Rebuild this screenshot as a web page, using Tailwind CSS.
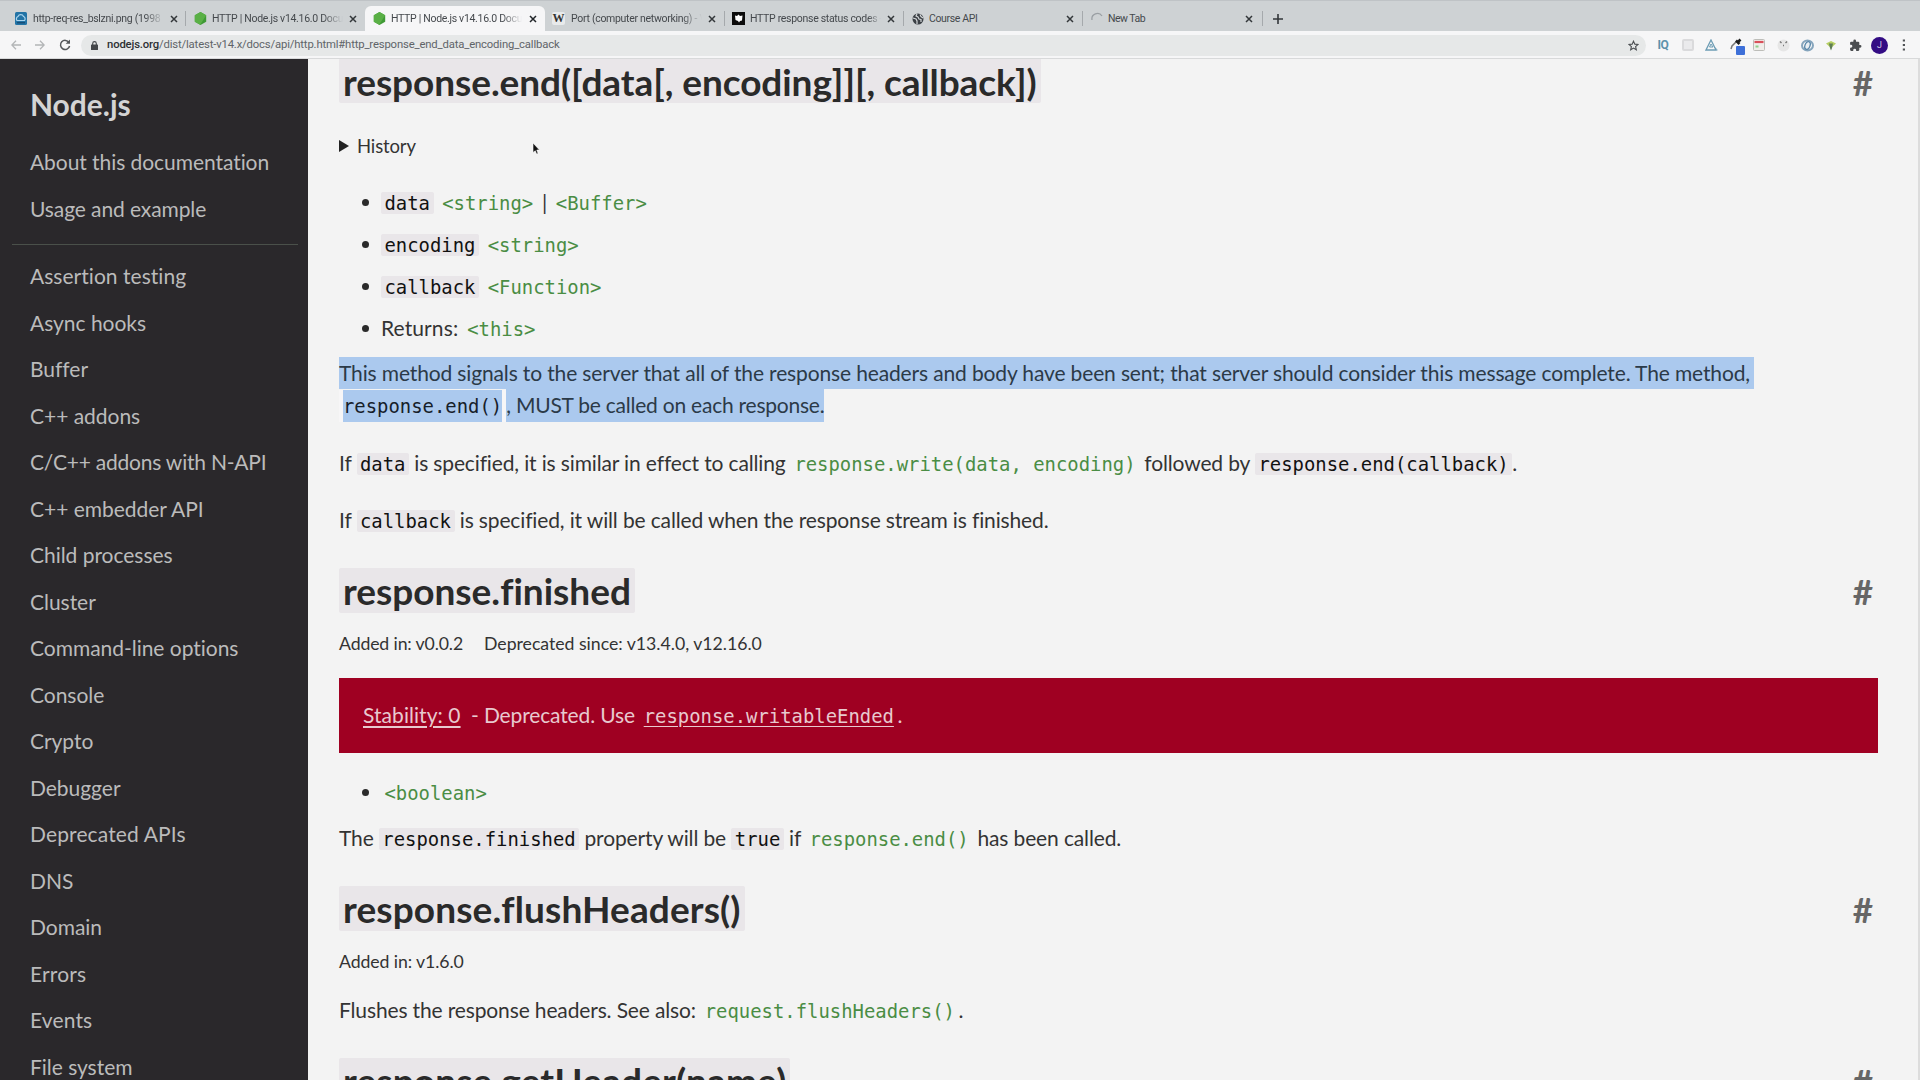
<!DOCTYPE html>
<html lang="en">
<head>
<meta charset="utf-8">
<title>HTTP | Node.js v14.16.0 Documentation</title>
<script src="https://cdn.jsdelivr.net/npm/@tailwindcss/browser@4"></script>
</head>
<body class="w-[1920px] h-[1080px] overflow-hidden bg-[#f3f3f3] font-['Lato',sans-serif] text-[#333] flex flex-col">

<!-- Tab strip -->
<header class="shrink-0 h-[59px] flex flex-col font-['Roboto',sans-serif] text-[10.500px] text-[#45494d]">
  <div class="h-[31px] bg-[#ced2d4] border-t border-[#bfc3c6] flex items-end pl-[6px]">
    <div class="w-[179px] h-[25px] pl-[8px] flex items-center">
      <svg class="w-[13px] h-[13px] shrink-0" viewBox="0 0 13 13"><rect x="1" width="12" height="13" rx="1.5" fill="#2273a5"/><path d="M3 8.500a2.500 2.500 0 0 1 1-4 3 3 0 0 1 5.500 0 2.500 2.500 0 0 1 1 4z" fill="none" stroke="#a9d4ee" stroke-width="1.200"/><path d="M3 10.800h8" stroke="#123f66"/></svg>
      <span class="ml-[6px] w-[131px] shrink-0 whitespace-nowrap [mask-image:linear-gradient(to_right,black_85%,transparent)] tracking-[-0.300px]">http-req-res_bslzni.png (1998</span>
      <svg class="w-[8px] h-[8px] ml-[6px] shrink-0" viewBox="0 0 8 8"><path d="M1 1l6 6M7 1l-6 6" stroke="#33373a" stroke-width="1.500"/></svg>
    </div>
    <div class="w-px h-[15px] mb-[5px] bg-[#a5a9ac]"></div>
    <div class="w-[179px] h-[25px] pl-[8px] flex items-center">
      <svg class="w-[13px] h-[13px] shrink-0" viewBox="0 0 13 13"><path d="M6.500 0l5.700 3.200v6.600L6.500 13 .8 9.800V3.200z" fill="#3f9a35"/><path d="M6.500 0l5.700 3.200-6 9.600L.8 9.800V3.200z" fill="#5ab046"/></svg>
      <span class="ml-[5px] w-[131px] shrink-0 whitespace-nowrap [mask-image:linear-gradient(to_right,black_85%,transparent)] tracking-[-0.300px]">HTTP | Node.js v14.16.0 Docu</span>
      <svg class="w-[8px] h-[8px] ml-[6px] shrink-0" viewBox="0 0 8 8"><path d="M1 1l6 6M7 1l-6 6" stroke="#33373a" stroke-width="1.500"/></svg>
    </div>
    <div class="w-[180px] h-[25px] pl-[8px] flex items-center bg-[#f6f6f7] rounded-t-[6px]">
      <svg class="w-[13px] h-[13px] shrink-0" viewBox="0 0 13 13"><path d="M6.500 0l5.700 3.200v6.600L6.500 13 .8 9.800V3.200z" fill="#3f9a35"/><path d="M6.500 0l5.700 3.200-6 9.600L.8 9.800V3.200z" fill="#5ab046"/></svg>
      <span class="ml-[5px] w-[131px] shrink-0 whitespace-nowrap [mask-image:linear-gradient(to_right,black_85%,transparent)] tracking-[-0.300px]">HTTP | Node.js v14.16.0 Docu</span>
      <svg class="w-[8px] h-[8px] ml-[7px] shrink-0" viewBox="0 0 8 8"><path d="M1 1l6 6M7 1l-6 6" stroke="#22262a" stroke-width="1.500"/></svg>
    </div>
    <div class="w-[179px] h-[25px] pl-[7px] flex items-center">
      <span class="w-[13px] h-[13px] shrink-0 rounded-[2px] bg-[#e8eaeb] font-['Liberation_Serif',serif] text-[12px] leading-[13px] font-bold text-center text-[#333]">W</span>
      <span class="ml-[6px] w-[131px] shrink-0 whitespace-nowrap [mask-image:linear-gradient(to_right,black_85%,transparent)] tracking-[-0.300px]">Port (computer networking) - \</span>
      <svg class="w-[8px] h-[8px] ml-[6px] shrink-0" viewBox="0 0 8 8"><path d="M1 1l6 6M7 1l-6 6" stroke="#33373a" stroke-width="1.500"/></svg>
    </div>
    <div class="w-px h-[15px] mb-[5px] bg-[#a5a9ac]"></div>
    <div class="w-[178px] h-[25px] pl-[7px] flex items-center">
      <svg class="w-[13px] h-[13px] shrink-0" viewBox="0 0 13 13"><rect width="13" height="13" fill="#0c0c0c"/><path d="M3 3.500l2 .5 1.500-1.500L8 4l2.500-.5-.5 5-2 .5-1 1.500-1-1.500-2.500-1z" fill="#fff"/></svg>
      <span class="ml-[5px] w-[131px] shrink-0 whitespace-nowrap [mask-image:linear-gradient(to_right,black_90%,transparent)] tracking-[-0.300px]">HTTP response status codes -</span>
      <svg class="w-[8px] h-[8px] ml-[6px] shrink-0" viewBox="0 0 8 8"><path d="M1 1l6 6M7 1l-6 6" stroke="#33373a" stroke-width="1.500"/></svg>
    </div>
    <div class="w-px h-[15px] mb-[5px] bg-[#a5a9ac]"></div>
    <div class="w-[178px] h-[25px] pl-[8px] flex items-center">
      <svg class="w-[12px] h-[12px] shrink-0" viewBox="0 0 12 12"><circle cx="6" cy="6" r="5.500" fill="#3b4045"/><path d="M1 5l3 1 1 2v3M5 1l-1 2 2 1 1 2 2 .5V9M8 1.500l1 2 2 1.500" fill="none" stroke="#d4d7d9" stroke-width="1.200"/></svg>
      <span class="ml-[5px] w-[131px] shrink-0 whitespace-nowrap tracking-[-0.350px]">Course API</span>
      <svg class="w-[8px] h-[8px] ml-[6px] shrink-0" viewBox="0 0 8 8"><path d="M1 1l6 6M7 1l-6 6" stroke="#33373a" stroke-width="1.500"/></svg>
    </div>
    <div class="w-px h-[15px] mb-[5px] bg-[#a5a9ac]"></div>
    <div class="w-[179px] h-[25px] pl-[8px] flex items-center">
      <svg class="w-[13px] h-[13px] shrink-0" viewBox="0 0 13 13"><path d="M1 8a5.500 5.500 0 0 1 10-4" fill="none" stroke="#9a9fa3" stroke-width="1.300"/></svg>
      <span class="ml-[4px] w-[131px] shrink-0 whitespace-nowrap tracking-[-0.500px]">New Tab</span>
      <svg class="w-[8px] h-[8px] ml-[6px] shrink-0" viewBox="0 0 8 8"><path d="M1 1l6 6M7 1l-6 6" stroke="#33373a" stroke-width="1.500"/></svg>
    </div>
    <div class="w-px h-[15px] mb-[5px] bg-[#a5a9ac]"></div>
    <svg class="w-[10px] h-[10px] ml-[10px] mb-[7px]" viewBox="0 0 10 10"><path d="M5 0v10M0 5h10" stroke="#33373a" stroke-width="1.600"/></svg>
  </div>

  <!-- Toolbar -->
  <div class="h-[28px] bg-[#f6f6f7] border-b border-[#d8d9da] flex items-center pl-[11px] pt-px">
    <svg class="w-[10px] h-[10px]" viewBox="0 0 10 10"><path d="M10 5H1M5 .8L.8 5 5 9.200" fill="none" stroke="#b3b5b7" stroke-width="1.300"/></svg>
    <svg class="w-[10px] h-[10px] ml-[14px]" viewBox="0 0 10 10"><path d="M0 5h9M5 .8L9.200 5 5 9.200" fill="none" stroke="#b3b5b7" stroke-width="1.300"/></svg>
    <svg class="w-[12px] h-[12px] ml-[14px]" viewBox="0 0 12 12"><path d="M10 3.500A4.600 4.600 0 1 0 10.600 7" fill="none" stroke="#55585b" stroke-width="1.500"/><path d="M11 .5v4.300H6.700z" fill="#55585b"/></svg>
    <div class="ml-[10px] w-[1565px] h-[21px] rounded-full bg-[#e6e8e8] flex items-center pl-[10px] pr-[7px]">
      <svg class="w-[7px] h-[9px]" viewBox="0 0 7 9"><rect y="3.500" width="7" height="5.500" rx=".6" fill="#44474a"/><path d="M1.700 4V2.400a1.800 1.800 0 0 1 3.600 0V4" fill="none" stroke="#44474a" stroke-width="1.100"/></svg>
      <span class="ml-[9px] whitespace-nowrap text-[11.300px] tracking-[-0.160px] text-[#606468]"><span class="text-[#2d3033] font-medium">nodejs.org</span>/dist/latest-v14.x/docs/api/http.html#http_response_end_data_encoding_callback</span>
      <svg class="w-[11px] h-[11px] ml-auto" viewBox="0 0 24 24"><path d="M12 2.500l2.900 6.500 7 .7-5.300 4.700 1.600 7L12 17.700 5.800 21.400l1.600-7L2.100 9.700l7-.7z" fill="none" stroke="#4c4f52" stroke-width="2.400"/></svg>
    </div>
    <div class="ml-[10px] w-[14px] text-center text-[12px] font-bold leading-none text-[#5c93ac] tracking-[-0.4px]">IQ</div>
    <div class="ml-[12px] w-[12px] h-[12px] border-2 border-[#dadadc] bg-[#eaeaec] rounded-[2px]"></div>
    <svg class="w-[13px] h-[12px] ml-[11px]" viewBox="0 0 13 12"><path d="M6 1l5 10H1z" fill="none" stroke="#6d9db5" stroke-width="1.300"/><path d="M4.500 8L6 5l2 3zM9 8l3.500 3" fill="none" stroke="#6d9db5"/></svg>
    <div class="relative w-[16px] h-[16px] ml-[11px]">
      <svg class="w-[12px] h-[12px] mt-[1px] ml-[1px]" viewBox="0 0 12 12"><path d="M1 11l1-3 5-5" fill="none" stroke="#777" stroke-width="1.500"/><path d="M6 2.500l3.500 3.500M7 5l3.500-3.500" stroke="#1d1d1d" stroke-width="2.600"/></svg>
      <span class="absolute left-[7px] top-[9px] w-[9px] h-[9px] rounded-[1px] bg-[#3d6fd8]"></span>
    </div>
    <svg class="w-[12px] h-[12px] ml-[8px]" viewBox="0 0 12 12"><rect x=".5" y=".5" width="11" height="11" rx="1" fill="#f0eeea" stroke="#bdbdb9"/><path d="M1.500 3h9" stroke="#d9505a" stroke-width="2.200"/><path d="M2.500 7.500h3" stroke="#8fd08c" stroke-width="2"/></svg>
    <svg class="w-[13px] h-[13px] ml-[12px]" viewBox="0 0 13 13"><circle cx="6.500" cy="6.500" r="6" fill="#e6e6e6"/><path d="M3 2.500l1.500 1.500M8.500 4l1.500-1.500M6 6.500h1" stroke="#777" stroke-width="1.400"/></svg>
    <svg class="w-[13px] h-[13px] ml-[11px]" viewBox="0 0 13 13"><ellipse cx="6.500" cy="6.500" rx="5.500" ry="5" fill="none" stroke="#86a5bd" stroke-width="2"/><ellipse cx="6.500" cy="6.500" rx="2.500" ry="4" transform="rotate(20 6.500 6.500)" fill="#e9eef3" stroke="#5685a8" stroke-width="1.300"/></svg>
    <svg class="w-[10px] h-[11px] ml-[12px]" viewBox="0 0 10 11"><path d="M0 3.500L5 1l5 2.500L5 8z" fill="#b6cf62"/><path d="M3 3.500h4L6 8l-1 2.500L4 8z" fill="#5e7d55"/></svg>
    <svg class="w-[13px] h-[13px] ml-[13px]" viewBox="0 0 24 24"><path d="M20.500 11H19V7a2 2 0 0 0-2-2h-4V3.500a2.500 2.500 0 0 0-5 0V5H4a2 2 0 0 0-2 2v3.800h1.500a2.700 2.700 0 0 1 0 5.400H2V20a2 2 0 0 0 2 2h3.800v-1.500a2.700 2.700 0 0 1 5.400 0V22H17a2 2 0 0 0 2-2v-4h1.500a2.500 2.500 0 0 0 0-5z" fill="#4b4e51"/></svg>
    <div class="ml-[9px] w-[17px] h-[17px] rounded-full bg-[#330c84] text-[#cfc6e2] text-[9px] leading-[17px] text-center">J</div>
    <svg class="w-[4px] h-[12px] ml-[14px]" viewBox="0 0 4 12"><path d="M.8 1.500h2.200M.8 6h2.200M.8 10.500h2.200" stroke="#505356" stroke-width="1.800"/></svg>
  </div>
</header>

<div class="flex flex-1 min-h-0">
  <!-- API index -->
  <nav class="w-[308px] shrink-0 h-[1021px] overflow-hidden bg-[#2a282b] text-[#bbb] text-[21px] leading-[46.500px] tracking-[-0.030px] whitespace-nowrap">
    <div class="pl-[30px] pt-[17px] text-[30px] leading-[57px] font-bold text-[#d4d4d4]">Node.js</div>
    <ul class="pl-[30px] pt-[6px]">
      <li class="tracking-[-0.060px]">About this documentation</li>
      <li class="tracking-[-0.100px]">Usage and example</li>
    </ul>
    <hr class="ml-[12px] mr-[10px] mt-[12px] mb-[8px] border-[#4a504a]">
    <ul class="pl-[30px]">
      <li class="tracking-[0.030px]">Assertion testing</li>
      <li>Async hooks</li>
      <li>Buffer</li>
      <li>C++ addons</li>
      <li class="tracking-[-0.220px]">C/C++ addons with N-API</li>
      <li>C++ embedder API</li>
      <li>Child processes</li>
      <li>Cluster</li>
      <li>Command-line options</li>
      <li>Console</li>
      <li>Crypto</li>
      <li>Debugger</li>
      <li class="tracking-[0.120px]">Deprecated APIs</li>
      <li>DNS</li>
      <li>Domain</li>
      <li class="tracking-[0.150px]">Errors</li>
      <li class="tracking-[0.150px]">Events</li>
      <li>File system</li>
    </ul>
  </nav>

  <!-- Documentation -->
  <main class="flex-1 h-[1021px] overflow-hidden pl-[31px] pr-[40px] border-r-2 border-[#dcdcdc] text-[21px] leading-[32px] tracking-[-0.140px] whitespace-nowrap">
    <h3 class="-mt-[1px] h-[45px] flex justify-between items-center text-[37px] leading-[45px] font-bold">
      <span class="h-[45px] leading-[47px] bg-[#e9e6e9] px-[4px] rounded-[2px] text-[#2a2a2a] tracking-[-0.070px]">response.end([data[, encoding]][, callback])</span>
      <span class="mr-[5px] pt-[3px] text-[35px] text-[#666]">#</span>
    </h3>

    <div class="mt-[27px] h-[32px] flex items-center text-[18.500px]">
      <svg class="w-[10px] h-[12px] mr-[8px]" viewBox="0 0 10 12"><path d="M0 0l10 6-10 6z" fill="#222"/></svg>
      <span>History</span>
    </div>

    <ul class="mt-[19px] ml-[23px] leading-[41px]">
      <li class="flex items-center h-[41.900px]"><i class="w-[7px] h-[7px] mr-[12px] mt-px rounded-full bg-[#2a2a2a]"></i><p class="h-[41.900px]"><code class="font-['DejaVu_Sans_Mono',monospace] tracking-normal text-[18.900px] text-[#111] bg-[#e9e6e9] rounded-[2px] px-[3.500px]">data</code> <code class="font-['DejaVu_Sans_Mono',monospace] tracking-normal text-[18.900px] text-[#4a8d44] px-[3.500px]">&lt;string&gt;</code> | <code class="font-['DejaVu_Sans_Mono',monospace] tracking-normal text-[18.900px] text-[#4a8d44] px-[3.500px]">&lt;Buffer&gt;</code></p></li>
      <li class="flex items-center h-[41.900px]"><i class="w-[7px] h-[7px] mr-[12px] mt-px rounded-full bg-[#2a2a2a]"></i><p class="h-[41.900px]"><code class="font-['DejaVu_Sans_Mono',monospace] tracking-normal text-[18.900px] text-[#111] bg-[#e9e6e9] rounded-[2px] px-[3.500px]">encoding</code> <code class="font-['DejaVu_Sans_Mono',monospace] tracking-normal text-[18.900px] text-[#4a8d44] px-[3.500px]">&lt;string&gt;</code></p></li>
      <li class="flex items-center h-[41.900px]"><i class="w-[7px] h-[7px] mr-[12px] mt-px rounded-full bg-[#2a2a2a]"></i><p class="h-[41.900px]"><code class="font-['DejaVu_Sans_Mono',monospace] tracking-normal text-[18.900px] text-[#111] bg-[#e9e6e9] rounded-[2px] px-[3.500px]">callback</code> <code class="font-['DejaVu_Sans_Mono',monospace] tracking-normal text-[18.900px] text-[#4a8d44] px-[3.500px]">&lt;Function&gt;</code></p></li>
      <li class="flex items-center h-[41.900px]"><i class="w-[7px] h-[7px] mr-[12px] mt-px rounded-full bg-[#2a2a2a]"></i><p class="h-[41.900px] tracking-[0.100px]">Returns: <code class="font-['DejaVu_Sans_Mono',monospace] tracking-normal text-[18.900px] text-[#4a8d44] px-[3.500px]">&lt;this&gt;</code></p></li>
    </ul>

    <!-- Selected paragraph -->
    <div class="mt-[8px] flex flex-col items-start text-[#2b3a48]">
      <div class="h-[32px] bg-[#abc9ee] pr-[4px]">This method signals to the server that all of the response headers and body have been sent; that server should consider this message complete. The method,</div>
      <div class="h-[33px] flex">
        <code class="mt-[1px] h-[32px] leading-[33px] border-l-[4px] border-r-[4px] border-[#f7f6f7] font-['DejaVu_Sans_Mono',monospace] tracking-normal text-[18.900px] text-[#16202a] bg-[#abc9ee]">response.end()</code>
        <span class="bg-[#abc9ee] tracking-[-0.230px]">, MUST be called on each response.</span>
      </div>
    </div>

    <p class="mt-[25px] h-[32px]">If <code class="font-['DejaVu_Sans_Mono',monospace] tracking-normal text-[18.900px] text-[#111] bg-[#e9e6e9] rounded-[2px] px-[3.500px]">data</code> is specified, it is similar in effect to calling <code class="font-['DejaVu_Sans_Mono',monospace] tracking-normal text-[18.900px] text-[#4a8d44] px-[3.500px]">response.write(data, encoding)</code> followed by <code class="font-['DejaVu_Sans_Mono',monospace] tracking-normal text-[18.900px] text-[#111] bg-[#e9e6e9] rounded-[2px] px-[3.500px]">response.end(callback)</code>.</p>
    <p class="mt-[25px] h-[32px]">If <code class="font-['DejaVu_Sans_Mono',monospace] tracking-normal text-[18.900px] text-[#111] bg-[#e9e6e9] rounded-[2px] px-[3.500px]">callback</code> is specified, it will be called when the response stream is finished.</p>

    <h3 class="mt-[32px] h-[45px] flex justify-between items-center text-[37px] leading-[45px] font-bold">
      <span class="bg-[#e9e6e9] px-[4px] rounded-[2px] text-[#2a2a2a] tracking-[-0.010px]">response.finished</span>
      <span class="mr-[5px] pt-[2px] text-[35px] text-[#666]">#</span>
    </h3>
    <div class="mt-[15px] text-[17.700px] flex gap-[21px]"><span>Added in: v0.0.2</span><span class="tracking-[-0.020px]">Deprecated since: v13.4.0, v12.16.0</span></div>
    <div class="mt-[18px] h-[75px] bg-[#9f0022] text-[#e8c9cf] px-[24px] flex items-center">
      <p class="h-[32px]"><span class="underline underline-offset-[3px] tracking-[0.060px]">Stability: 0</span>&nbsp; - Deprecated. Use <code class="mx-[3.500px] font-['DejaVu_Sans_Mono',monospace] tracking-normal text-[18.900px] underline underline-offset-[3px]">response.writableEnded</code>.</p>
    </div>
    <ul class="mt-[19px] ml-[23px]">
      <li class="flex items-center h-[42px]"><i class="w-[7px] h-[7px] mr-[12px] rounded-full bg-[#2a2a2a]"></i><code class="font-['DejaVu_Sans_Mono',monospace] tracking-normal text-[18.900px] text-[#4a8d44] px-[3.500px]">&lt;boolean&gt;</code></li>
    </ul>
    <p class="mt-[8px] h-[32px]">The <code class="font-['DejaVu_Sans_Mono',monospace] tracking-normal text-[18.900px] text-[#111] bg-[#e9e6e9] rounded-[2px] px-[3.500px]">response.finished</code> property will be <code class="font-['DejaVu_Sans_Mono',monospace] tracking-normal text-[18.900px] text-[#111] bg-[#e9e6e9] rounded-[2px] px-[3.500px]">true</code> if <code class="font-['DejaVu_Sans_Mono',monospace] tracking-normal text-[18.900px] text-[#4a8d44] px-[3.500px]">response.end()</code> has been called.</p>

    <h3 class="mt-[32px] h-[45px] flex justify-between items-center text-[37px] leading-[45px] font-bold">
      <span class="bg-[#e9e6e9] px-[4px] rounded-[2px] text-[#2a2a2a] tracking-[0.120px]">response.flushHeaders()</span>
      <span class="mr-[5px] pt-[2px] text-[35px] text-[#666]">#</span>
    </h3>
    <div class="mt-[15px] text-[17.700px] tracking-[-0.100px]">Added in: v1.6.0</div>
    <p class="mt-[16px] h-[32px]">Flushes the response headers. See also: <code class="font-['DejaVu_Sans_Mono',monospace] tracking-normal text-[18.900px] text-[#4a8d44] px-[3.500px]">request.flushHeaders()</code>.</p>
    <h3 class="mt-[32px] h-[45px] flex justify-between items-center text-[37px] leading-[45px] font-bold">
      <span class="bg-[#e9e6e9] px-[4px] rounded-[2px] text-[#2a2a2a] tracking-[0.120px]">response.getHeader(name)</span>
      <span class="mr-[5px] pt-[2px] text-[35px] text-[#666]">#</span>
    </h3>
  </main>
</div>

<!-- Mouse pointer -->
<svg class="absolute left-[532px] top-[142px] w-[8px] h-[13px]" viewBox="0 0 8 13"><path d="M1 1l6.500 7H4.800l1.300 3.500-1.500.6L3.300 8.800 1 10.500z" fill="#111" stroke="#fff" stroke-width=".6"/></svg>
</body>
</html>
